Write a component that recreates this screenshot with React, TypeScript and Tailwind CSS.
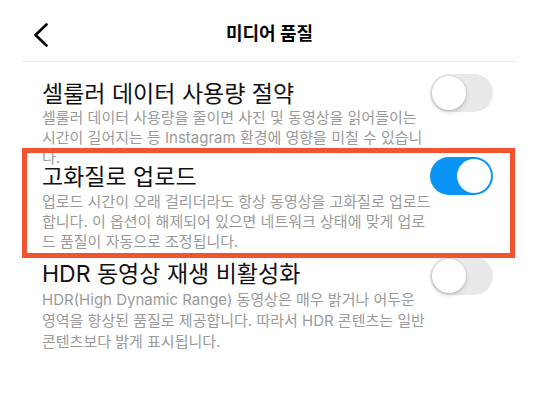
import React from "react";

const FONT = { fontFamily: '"Inter", "Noto Sans CJK KR", sans-serif' };

function Toggle({ on }: { on: boolean }) {
  return (
    <div
      className={
        on
          ? "w-[63px] h-[38px] rounded-full bg-[#0a95f6] flex items-center justify-end p-[2px] shrink-0"
          : "w-[63px] h-[38px] rounded-full bg-[#e9e9eb] flex items-center justify-start p-[2px] shrink-0"
      }
    >
      <div
        className={
          on
            ? "w-[34px] h-[34px] rounded-full bg-white"
            : "w-[34px] h-[34px] rounded-full bg-white shadow-[0_2px_4px_rgba(0,0,0,0.18),0_0_0_1px_rgba(0,0,0,0.04)]"
        }
      />
    </div>
  );
}

function Row({
  title,
  lines,
  on,
  className,
  toggleClass,
  titleClass,
  descClass,
  lastLineClass,
}: {
  title: string;
  lines: string[];
  on: boolean;
  className: string;
  toggleClass: string;
  titleClass?: string;
  descClass?: string;
  lastLineClass?: string;
}) {
  return (
    <div className={"flex items-start justify-between " + className}>
      <div className="flex flex-col">
        <div className={"text-[23px] text-[#111] whitespace-nowrap " + (titleClass ?? "leading-[28px]")}>{title}</div>
        <div className={"text-[15px] text-[#9a9a9a] whitespace-nowrap " + (descClass ?? "leading-[20px]")}>
          {lines.map((l, i) => (
            <div key={i} className={i === lines.length - 1 && lastLineClass ? lastLineClass : ""}>
              {l}
            </div>
          ))}
        </div>
      </div>
      <div className={toggleClass}>
        <Toggle on={on} />
      </div>
    </div>
  );
}

export default function App() {
  return (
    <div className="relative w-[539px] h-[409px] bg-white overflow-hidden" style={FONT}>
      <header className="mx-[22px] h-[62px] border-b border-[#ececec] grid grid-cols-[1fr_auto_1fr] items-start pt-[22px]">
        <div className="pl-[11px] pt-[1px]">
          <svg width="16" height="24" viewBox="0 0 16 24" fill="none">
            <path d="M13.5 1.5 L2.5 12 L13.5 22.5" stroke="#000" strokeWidth="2.6" strokeLinecap="round" strokeLinejoin="round" />
          </svg>
        </div>
        <h1 className="text-[18px] leading-[24px] font-bold text-black">미디어 품질</h1>
        <div />
      </header>

      <div className="mx-[22px] pl-[20px] pr-[24px]">
        <Row
          className="mt-[18px]"
          toggleClass="-mt-[6px]"
          title="셀룰러 데이터 사용량 절약"
          on={false}
          lastLineClass="leading-[14px] pt-[3px]"
          lines={[
            "셀룰러 데이터 사용량을 줄이면 사진 및 동영상을 읽어들이는",
            "시간이 길어지는 등 Instagram 환경에 영향을 미칠 수 있습니",
            "다.",
          ]}
        />
        <div className="relative">
          <div className="absolute -left-[20px] -right-[22px] -top-[17px] h-[110px] border-[5px] border-[#f4532f] pointer-events-none" />
          <Row
            className="mt-0"
            toggleClass="-mt-[8px]"
            titleClass="leading-[24px]"
            descClass="leading-[20px] mt-[3px]"
            title="고화질로 업로드"
            on={true}
            lines={[
              "업로드 시간이 오래 걸리더라도 항상 동영상을 고화질로 업로드",
              "합니다. 이 옵션이 해제되어 있으면 네트워크 상태에 맞게 업로",
              "드 품질이 자동으로 조정됩니다.",
            ]}
          />
        </div>
        <Row
          className="mt-[8px]"
          toggleClass="-mt-[3px]"
          title="HDR 동영상 재생 비활성화"
          on={false}
          descClass="leading-[21px] mt-[1px]"
          lines={[
            "HDR(High Dynamic Range) 동영상은 매우 밝거나 어두운",
            "영역을 향상된 품질로 제공합니다. 따라서 HDR 콘텐츠는 일반",
            "콘텐츠보다 밝게 표시됩니다.",
          ]}
        />
      </div>
    </div>
  );
}
